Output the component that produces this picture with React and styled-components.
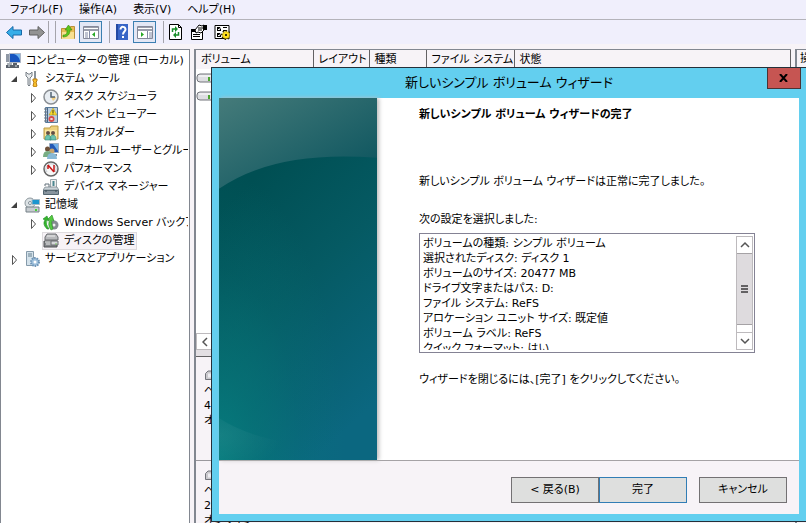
import React from 'react';
import styled, { createGlobalStyle, css } from 'styled-components';

const GlobalStyle = createGlobalStyle`
    * {
        box-sizing: border-box;
    }

    body {
        margin: 0;
        overflow: hidden;
        background: #f7f3f7;
        color: #000;
        font: 11px/18px 'DejaVu Sans', 'Noto Sans CJK JP', sans-serif;
        font-feature-settings: 'palt';
    }

    button {
        font: inherit;
        font-feature-settings: inherit;
        color: inherit;
    }
`;

const menus = ['ファイル(F)', '操作(A)', '表示(V)', 'ヘルプ(H)'];

const tree = [
    { level: 0, icon: 'computer', label: 'コンピューターの管理 (ローカル)' },
    { level: 1, icon: 'tools', label: 'システム ツール', arrow: 'open' },
    { level: 2, icon: 'clock', label: 'タスク スケジューラ', arrow: 'closed' },
    { level: 2, icon: 'event', label: 'イベント ビューアー', arrow: 'closed' },
    { level: 2, icon: 'share', label: '共有フォルダー', arrow: 'closed' },
    { level: 2, icon: 'users', label: 'ローカル ユーザーとグループ', arrow: 'closed' },
    { level: 2, icon: 'gauge', label: 'パフォーマンス', arrow: 'closed' },
    { level: 2, icon: 'device', label: 'デバイス マネージャー' },
    { level: 1, icon: 'storage', label: '記憶域', arrow: 'open' },
    { level: 2, icon: 'backup', label: 'Windows Server バックアップ', arrow: 'closed' },
    { level: 2, icon: 'disk', label: 'ディスクの管理', selected: true },
    { level: 1, icon: 'service', label: 'サービスとアプリケーション', arrow: 'closed' },
];

const settings = [
    'ボリュームの種類: シンプル ボリューム',
    '選択されたディスク: ディスク 1',
    'ボリュームのサイズ: 20477 MB',
    'ドライブ文字またはパス: D:',
    'ファイル システム: ReFS',
    'アロケーション ユニット サイズ: 既定値',
    'ボリューム ラベル: ReFS',
    'クイック フォーマット: はい',
];

const icons = {
    back: (
        <path d="M.5 8.500 7 2.500v3.500h8.500v5H7v3.500Z" fill="#36aee8" stroke="#1769a8" />
    ),
    forward: (
        <path d="M15.500 8.500 9 2.500v3.500H.5v5H9v3.500Z" fill="#939393" stroke="#606060" />
    ),
    up: (
        <>
            <path d="M1.500 4.500h8l1-2h4v12h-13Z" fill="#e9bd55" stroke="#b9913a" />
            <path d="M2 15V8h12v7Z" fill="#f8df91" />
            <path d="M3 11c4 0 4-2 4-5H5l3.500-5L12 6h-2c0 4-2 7-7 7Z" fill="#5cc51d" stroke="#39880f" strokeWidth=".6" />
        </>
    ),
    paneLeft: (
        <>
            <path d="M.5 2.500h15v12H.5Z" fill="#fff" stroke="#85899a" />
            <path d="M1 3h14v1H1ZM1 5h14v2H1Z" fill="#9a9dab" />
            <path d="M6.500 7v7M2 9h3M2 11h3M2 13h3" stroke="#8188a4" />
            <path d="m12 8-3 2.500 3 2.500Z" fill="#27a825" />
        </>
    ),
    help: (
        <>
            <path d="M2 0h12v16H2Z" fill="#3865c7" />
            <path d="M2 0h2v16H2Z" fill="#2349a3" />
            <path d="M6.500 5.500c0-4 5-3 5 0 0 2-2.500 2-2.500 5M9 12v2" fill="none" stroke="#fff" strokeWidth="2" />
        </>
    ),
    paneRight: (
        <>
            <path d="M.5 2.500h15v12H.5Z" fill="#fff" stroke="#85899a" />
            <path d="M1 3h14v1H1ZM1 5h14v2H1Z" fill="#9a9dab" />
            <path d="M10.500 7v7M12 9h3M12 11h3M12 13h3" stroke="#8188a4" />
            <path d="m4 8 3 2.500L4 13Z" fill="#27a825" />
        </>
    ),
    refresh: (
        <>
            <path d="M1.500.5h9l3 3v12h-12Z" fill="#fff" stroke="#000" />
            <path d="M10.500.5v3h3" fill="none" stroke="#000" />
            <path d="M4.500 8V5H8M10.500 8v3H7" fill="none" stroke="#168c28" strokeWidth="1.500" />
            <path d="m7 2 3 3-3 3ZM8 8l-3 3 3 3Z" fill="#168c28" />
        </>
    ),
    properties: (
        <>
            <path d="M.5 5.500h11v10H.5Z" fill="#fff" stroke="#000" />
            <path d="M0 5h11v3H0Z" />
            <path d="M2 10.500h7M2 12.500h7" stroke="#000" />
            <path d="m4 6 4-5 3 1 2-1v5l-3 3-3-1-2 1Z" fill="#fff" stroke="#000" />
            <path d="M7 4h5M7 6h4" stroke="#000" />
            <path d="M12 1h4v5h-4Z" />
        </>
    ),
    console: (
        <>
            <path d="M1 1.500h14v13H1Z" fill="#fff" stroke="#000" />
            <path d="M3 3h4v4H3ZM3 9h4v4H3ZM9 3h4v1H9ZM9 6h4v1H9Z" />
            <path d="m4 5 1 1 2-3M4 11l1 1 2-3" stroke="#fff" fill="none" />
            <circle cx="12" cy="11" r="4" fill="none" stroke="#302a00" strokeDasharray="1.500 1.500" strokeWidth="2" />
            <circle cx="12" cy="11" r="3.500" fill="#ffdf20" stroke="#b99b00" strokeWidth=".5" />
            <circle cx="12" cy="11" r="1" />
        </>
    ),
    computer: (
        <>
            <path d="M1 1h3v8H1Z" fill="#8f98a5" />
            <path d="M4.500.5h11v9h-11Z" fill="#1755bf" stroke="#adb5c3" />
            <path d="M9 1h6v7c-1-4-3-6-6-7" fill="#6eb3ee" />
            <path d="M8 10h4v2H8ZM1 12h13v3H1Z" fill="#59616b" />
            <path d="M2 10h5v2H2Z" fill="#aab1b7" />
            <path d="M3 13h2M10 13h2" stroke="#dce4e9" />
        </>
    ),
    tools: (
        <>
            <path d="M2 1v4l2 2v7q1 2 2 0V7l2-2V1L6 3H4Z" fill="#e8ebed" stroke="#777f86" />
            <path d="M11 0v8" stroke="#89929a" strokeWidth="2" />
            <path d="M9 8h4v2l-1 1 1 4q-2 2-4 0l1-4-1-1Z" fill="#f9c12d" stroke="#b87d13" />
        </>
    ),
    clock: (
        <>
            <circle cx="8" cy="8" r="7" fill="#e8edf2" stroke="#8b8f94" strokeWidth="1.500" />
            <path d="M8 8h5a5 5 0 0 1-3 4Z" fill="#f3ce7e" />
            <path d="M8 3v5h4" fill="none" stroke="#536474" strokeWidth="1.500" />
        </>
    ),
    event: (
        <>
            <path d="M2.500.5h12v15h-12Z" fill="#b9cdde" stroke="#57799a" />
            <path d="M4.500 1v14" stroke="#456589" />
            <path d="M1 2h3M1 5h3M1 8h3M1 11h3M1 14h3" stroke="#707881" />
            <path d="m10 1 4 7H6Z" fill="#f8dc2b" stroke="#af931c" strokeWidth=".5" />
            <path d="M10 3v3M10 6.500v1" stroke="#3d3b20" />
            <circle cx="8.500" cy="12" r="3" fill="#d84a49" />
            <path d="m7.500 11 2 2m0-2-2 2" stroke="#fff" />
        </>
    ),
    share: (
        <>
            <path d="M1 3h6l1-2h7v13H1Z" fill="#eed27d" stroke="#bd9b45" />
            <path d="M2 5h12v9H2Z" fill="#fae6a0" />
            <circle cx="5" cy="8" r="2" fill="#655044" />
            <circle cx="10" cy="8" r="2" fill="#655044" />
            <path d="M2 15q0-5 3-5t3 5ZM7 15q0-5 3-5t3 5Z" fill="#6cc4b0" stroke="#368878" strokeWidth=".6" />
        </>
    ),
    users: (
        <>
            <path d="M6.500.5h9v9h-9Z" fill="#2358b4" stroke="#9cadc1" />
            <path d="M10 1h5v7Z" fill="#70afe8" />
            <path d="M10 11h4v2h-4Z" fill="#7e8896" />
            <circle cx="4.500" cy="6" r="2.500" fill="#6e5139" />
            <circle cx="9" cy="8" r="2.500" fill="#c9a46c" />
            <path d="M0 14q0-6 4.500-6t5 6Z" fill="#78ad84" />
            <path d="M4 16q0-6 5-6t5 6Z" fill="#88b9d6" />
        </>
    ),
    gauge: (
        <>
            <circle cx="8" cy="8" r="7" fill="#f7f7f7" stroke="#666" strokeWidth="1.500" />
            <path d="M4 11a5 5 0 1 1 8 0" fill="none" stroke="#c5ccd2" />
            <path d="m5 4 6 7M5 4v4M11 4v7" stroke="#c61818" strokeWidth="1.500" />
        </>
    ),
    device: (
        <>
            <path d="M7.500.5h6v9h-6Z" fill="#eee" stroke="#9ca7ac" />
            <path d="M10.500 2v5" stroke="#4c8790" strokeWidth="2" />
            <path d="M2 7V5h4v3" fill="none" stroke="#63717b" />
            <path d="M2 8h12l2 3H0Z" fill="#cbd3d8" stroke="#63717b" strokeWidth=".6" />
            <path d="M.5 11.500h15v4H.5Z" fill="#87949e" stroke="#546670" />
            <path d="M3 11v2M13 11v2" stroke="#394852" />
        </>
    ),
    storage: (
        <>
            <circle cx="6" cy="6" r="5" fill="#dce2e5" stroke="#8f999f" />
            <circle cx="6" cy="6" r="1.500" fill="#fff" stroke="#839098" />
            <path d="M8 2.500h7.500v5H8Z" fill="#1c95cf" stroke="#a8bac5" />
            <path d="M2 10h13v5H2Z" fill="#c7ccd0" stroke="#758087" />
            <path d="M11 12h2v2h-2Z" fill="#45cf35" />
        </>
    ),
    backup: (
        <>
            <circle cx="11" cy="10" r="4.500" fill="#858b91" />
            <circle cx="11" cy="10" r="1.500" fill="#eee" />
            <path d="M4 14Q-1 9 2 5L0 4l4-3 2 5-2-1q-2 4 2 9Z" fill="#35b52d" stroke="#228b26" strokeWidth=".6" />
            <path d="M8 15Q4 9 7 5L5 4l4-4 2 6-2-1q-1 3 1 9Z" fill="#55ca40" stroke="#268c27" strokeWidth=".6" />
        </>
    ),
    disk: (
        <>
            <path d="M2 4 4 1h9l2 3v3H2Z" fill="#b8b9bc" stroke="#696b6e" />
            <path d="M4 3h8" stroke="#eee" />
            <path d="M1 8h13v6H1Z" fill="#85888b" stroke="#4e5153" />
            <path d="M2 9h12M3 11h6" stroke="#eee" />
            <path d="M8 8h7v4H8Z" fill="#d5d6d8" stroke="#696b6e" />
            <path d="M12 11h2" stroke="#71ba5a" />
        </>
    ),
    service: (
        <>
            <path d="M2.500.5h7v14h-7Z" fill="#d4e2eb" stroke="#859aaa" />
            <path d="M4 3h4M4 5h4" stroke="#678090" />
            <circle cx="11" cy="11" r="4" fill="#9fc0dc" stroke="#6c94b7" strokeWidth="2" strokeDasharray="1.500 1" />
            <circle cx="11" cy="11" r="1.500" fill="#fff" />
        </>
    ),
    drive: (
        <>
            <path d="M1 7q0-3 3-3h12v8H4q-3 0-3-3Z" fill="#dedee2" stroke="#73747b" />
            <path d="M3 6h12" stroke="#fff" />
            <path d="M12 7h2v4h-2Z" fill="#4da633" />
        </>
    ),
    hardDisk: (
        <>
            <path d="M1.500 6.500 4 4h12v8.500H1.500Z" fill="#c9c8cc" stroke="#73747b" />
            <path d="M4 6.500h12v4H4Z" fill="#eeedf1" />
        </>
    ),
    openArrow: <path d="M7 5v6H1Z" fill="#404040" />,
    closedArrow: <path d="m2.500 4.500 4 4.500-4 4.500Z" fill="#fff" stroke="#555" />,
};

const Icon = ({ name, width = 16 }) => (
    <svg width={width} height="16" viewBox={`0 0 ${width} 16`} aria-hidden="true">
        {icons[name]}
    </svg>
);

const Chevron = ({ d }) => (
    <svg width="10" height="8" viewBox="0 0 10 8" aria-hidden="true">
        <path d={d} fill="none" stroke="#555" strokeWidth="1.5" />
    </svg>
);

function Wizard() {
    return (
        <Dialog role="dialog" aria-labelledby="wizard-title">
            <TitleBar>
                <Title id="wizard-title">新しいシンプル ボリューム ウィザード</Title>
                <CloseButton type="button" aria-label="閉じる">
                    <svg width="10" height="8" viewBox="0 0 10 8">
                        <path d="m1 0 7 8M8 0 1 8" stroke="#000" strokeWidth="2" />
                    </svg>
                </CloseButton>
            </TitleBar>
            <DialogBody>
                <DialogContent>
                    <Banner viewBox="0 0 158 363" preserveAspectRatio="none" aria-hidden="true">
                        <defs>
                            <linearGradient id="upper" x1="0" y1="0" x2="1" y2="1">
                                <stop stopColor="#457b7a" />
                                <stop offset="1" stopColor="#07515c" />
                            </linearGradient>
                            <linearGradient id="lower" x1=".2" y1="0" x2=".6" y2="1">
                                <stop offset=".2" stopColor="#004f53" />
                                <stop offset=".55" stopColor="#055a63" />
                                <stop offset="1" stopColor="#0b6780" />
                            </linearGradient>
                            <radialGradient id="glow" cx="0" cy="1" r=".8">
                                <stop stopColor="#067f7f" stopOpacity=".9" />
                                <stop offset=".3" stopColor="#067a7a" stopOpacity=".6" />
                                <stop offset=".65" stopColor="#067a7a" stopOpacity=".2" />
                                <stop offset="1" stopColor="#067a7a" stopOpacity="0" />
                            </radialGradient>
                            <radialGradient id="sheen" cx="0" cy=".4" r=".9">
                                <stop stopColor="#fff" stopOpacity=".06" />
                                <stop offset="1" stopColor="#fff" stopOpacity="0" />
                            </radialGradient>
                        </defs>
                        <path d="M0 0h158v363H0Z" fill="url(#lower)" />
                        <path d="M0 0h158v363H0Z" fill="url(#glow)" />
                        <path d="M0 0h158v60Q56 52 0 91Z" fill="url(#upper)" />
                        <path d="M0 321q25 17 70 25v17H0Z" fill="url(#sheen)" />
                    </Banner>
                    <Copy>
                        <Heading>新しいシンプル ボリューム ウィザードの完了</Heading>
                        <Message>新しいシンプル ボリューム ウィザードは正常に完了しました。</Message>
                        <ListLabel id="settings-label">次の設定を選択しました:</ListLabel>
                        <SettingsBox role="group" aria-labelledby="settings-label">
                            <SettingsList>
                                {settings.map((line) => (
                                    <li key={line}>{line}</li>
                                ))}
                            </SettingsList>
                            <ScrollBar>
                                <ScrollButton type="button" aria-label="上へ">
                                    <Chevron d="m1 6 4-4 4 4" />
                                </ScrollButton>
                                <ScrollThumb>
                                    <i />
                                    <i />
                                    <i />
                                </ScrollThumb>
                                <ScrollTrack />
                                <ScrollButton type="button" aria-label="下へ">
                                    <Chevron d="m1 2 4 4 4-4" />
                                </ScrollButton>
                            </ScrollBar>
                        </SettingsBox>
                        <Closing>ウィザードを閉じるには、[完了] をクリックしてください。</Closing>
                    </Copy>
                </DialogContent>
                <DialogFooter>
                    <ButtonPair>
                        <WizardButton type="button">&lt; 戻る(B)</WizardButton>
                        <WizardButton type="button" $primary>
                            完了
                        </WizardButton>
                    </ButtonPair>
                    <WizardButton type="button">キャンセル</WizardButton>
                </DialogFooter>
            </DialogBody>
        </Dialog>
    );
}

export default function App() {
    return (
        <>
            <GlobalStyle />
            <Window>
                <MenuBar>
                    {menus.map((label) => (
                        <MenuItem type="button" key={label}>
                            {label}
                        </MenuItem>
                    ))}
                </MenuBar>
                <ToolBar>
                    <ToolButton type="button" aria-label="戻る"><Icon name="back" /></ToolButton>
                    <ToolButton type="button" aria-label="進む"><Icon name="forward" /></ToolButton>
                    <Divider $double />
                    <ToolButton type="button" aria-label="上へ"><Icon name="up" /></ToolButton>
                    <ToolButton type="button" aria-label="ツリーの表示" $active><Icon name="paneLeft" /></ToolButton>
                    <Divider />
                    <ToolButton type="button" aria-label="ヘルプ"><Icon name="help" /></ToolButton>
                    <ToolButton type="button" aria-label="操作の表示" $active><Icon name="paneRight" /></ToolButton>
                    <Divider />
                    <ToolButton type="button" aria-label="更新"><Icon name="refresh" /></ToolButton>
                    <ToolButton type="button" aria-label="プロパティ"><Icon name="properties" /></ToolButton>
                    <ToolButton type="button" aria-label="設定"><Icon name="console" /></ToolButton>
                </ToolBar>
                <Panes>
                    <Tree>
                        {tree.map((item) => (
                            <TreeRow key={item.label} $level={item.level}>
                                {item.level > 0 && (
                                    <Arrow>
                                        {item.arrow && <Icon name={`${item.arrow}Arrow`} width={8} />}
                                    </Arrow>
                                )}
                                <TreeItem $selected={item.selected}>
                                    <Icon name={item.icon} />
                                    <span>{item.label}</span>
                                </TreeItem>
                            </TreeRow>
                        ))}
                    </Tree>
                    <Results>
                        <VolumeArea>
                            <VolumeTable>
                                <thead>
                                    <tr>
                                        <Column $width="117px">ボリューム</Column>
                                        <Column $width="56px">レイアウト</Column>
                                        <Column $width="57px">種類</Column>
                                        <Column $width="88px">ファイル システム</Column>
                                        <Column>状態</Column>
                                    </tr>
                                </thead>
                                <tbody>
                                    <tr><td colSpan="5"><Icon name="drive" /></td></tr>
                                    <tr><td colSpan="5"><Icon name="drive" /></td></tr>
                                </tbody>
                            </VolumeTable>
                            <SideScroll type="button" aria-label="左へ">
                                <svg width="6" height="10" viewBox="0 0 6 10">
                                    <path d="M5 1 1 5l4 4" fill="none" stroke="#555" strokeWidth="1.500" />
                                </svg>
                            </SideScroll>
                        </VolumeArea>
                        <DiskArea>
                            <DiskRow>
                                <Icon name="hardDisk" />
                                <p>ベーシック</p>
                                <p>40.00 GB</p>
                                <p>オンライン</p>
                            </DiskRow>
                            <DiskRow>
                                <Icon name="hardDisk" />
                                <p>ベーシック</p>
                                <p>20.00 GB</p>
                                <p>オンライン</p>
                            </DiskRow>
                        </DiskArea>
                    </Results>
                    <Actions>操作</Actions>
                </Panes>
                <Wizard />
            </Window>
        </>
    );
}

const Window = styled.main`
    position: relative;
    display: flex;
    flex-direction: column;
    height: 100vh;
    overflow: hidden;
`;

const MenuBar = styled.nav`
    display: flex;
    flex: none;
    gap: 16px;
    height: 19px;
    padding: 0 10px;
    background: #f0effc;
`;

const MenuItem = styled.button`
    padding: 0;
    border: 0;
    background: none;
    line-height: 16px;
`;

const ToolBar = styled.div`
    display: flex;
    flex: none;
    align-items: center;
    height: 25px;
    padding: 0 2px;
    border-top: 1px solid #b4b3ba;
    background: #f0effc;
`;

const ToolButton = styled.button`
    display: grid;
    place-items: center;
    width: 23px;
    height: 22px;
    padding: 0;
    border: 1px solid ${({ $active }) => ($active ? '#3c7fb1' : 'transparent')};
    background: ${({ $active }) => ($active ? '#e3e7f5' : 'none')};
`;

const Divider = styled.span`
    width: 8px;
    height: 22px;
    border: 0 solid #a5a4ac;
    border-width: ${({ $double }) => ($double ? '0 1px' : '0 1px 0 0')};
`;

const Panes = styled.div`
    display: flex;
    flex: 1;
    gap: 4px;
    min-height: 0;
    padding-top: 5px;
`;

const Tree = styled.ul`
    flex: 0 0 190px;
    margin: 0;
    padding: 2px 1px 0 0;
    overflow: hidden;
    list-style: none;
    border: 1px solid #828790;
    border-bottom: 0;
    background: #fff;
`;

const TreeRow = styled.li`
    display: flex;
    height: 18px;
    padding-left: ${({ $level }) => ($level ? $level * 19 - 10 : 3)}px;
    overflow: hidden;
    white-space: nowrap;
`;

const Arrow = styled.span`
    display: flex;
    flex: 0 0 13px;
    align-items: center;
`;

const TreeItem = styled.span`
    display: flex;
    align-items: center;
    gap: 5px;
    padding-right: 2px;
    border: 1px solid ${({ $selected }) => ($selected ? '#dedbde' : 'transparent')};
    background: ${({ $selected }) => ($selected ? '#f7f3f7' : 'none')};

    svg {
        flex: none;
    }
`;

const Results = styled.section`
    display: flex;
    flex: 1;
    flex-direction: column;
    min-width: 0;
    border: 1px solid #828790;
    border-width: 1px 0 0 2px;
`;

const VolumeArea = styled.div`
    display: flex;
    flex: none;
    flex-direction: column;
    justify-content: space-between;
    height: 306px;
    background: #fff;
    border-bottom: 6px solid #e3dfe3;
`;

const VolumeTable = styled.table`
    width: 100%;
    table-layout: fixed;
    border-collapse: collapse;

    td {
        height: 18px;
        padding: 0;
    }

    svg {
        display: block;
    }
`;

const Column = styled.th`
    width: ${({ $width }) => $width || 'auto'};
    height: 18px;
    padding: 1px 0 0 5px;
    overflow: hidden;
    font-weight: 400;
    text-align: left;
    white-space: nowrap;
    background: #f7f3f7;
    border-right: 1px solid #636163;
`;

const SideScroll = styled.button`
    display: grid;
    place-items: center;
    width: 17px;
    height: 17px;
    padding: 0;
    border: 1px solid #bdbabd;
    background: #fff;
`;

const DiskArea = styled.div`
    flex: 1;
    min-height: 0;
    padding-top: 4px;
    overflow: hidden;
    border-top: 1px solid #636163;
`;

const DiskRow = styled.div`
    height: 100px;
    padding: 6px 8px;
    border-bottom: 1px solid #9a989d;
    line-height: 15px;

    p {
        margin: 0;
    }

    svg {
        display: block;
    }
`;

const Actions = styled.aside`
    flex: 0 0 11px;
    padding-left: 3px;
    overflow: hidden;
    border: 1px solid #828790;
    border-width: 1px 0 0 2px;
    white-space: nowrap;
`;

const Dialog = styled.section`
    position: absolute;
    top: 67px;
    right: 0;
    bottom: 1px;
    left: 211px;
    display: flex;
    flex-direction: column;
    padding: 0 7px;
    border: 1px solid #24303a;
    border-right: 0;
    background: #63cfef;
`;

const TitleBar = styled.header`
    display: flex;
    flex: 0 0 30px;
    align-items: flex-start;
    margin-right: -2px;
`;

const Title = styled.h1`
    flex: 1;
    margin: 0;
    padding-left: 32px;
    font-size: 13px;
    font-weight: 400;
    line-height: 30px;
    text-align: center;
`;

const CloseButton = styled.button`
    display: grid;
    place-items: center;
    width: 34px;
    height: 21px;
    padding: 0;
    border: 1px solid #4b3334;
    border-top: 0;
    background: #c65552;
`;

const DialogBody = styled.div`
    display: flex;
    flex: 1;
    flex-direction: column;
    min-height: 0;
    margin-bottom: 7px;
    background: #f7f3f7;
`;

const DialogContent = styled.div`
    display: flex;
    flex: 1;
    min-height: 0;
    background: #fff;
    border-bottom: 1px solid #a5a2a5;
`;

const Banner = styled.svg`
    flex: 0 0 158px;
    width: 158px;
    height: 100%;
    box-shadow: 2px 0 4px #bbb;
`;

const Copy = styled.div`
    flex: 1;
    min-width: 0;
    padding: 8px 44px 0 42px;
`;

const Heading = styled.h2`
    margin: 0 0 49px;
    font-size: 11px;
    line-height: 18px;
`;

const Message = styled.p`
    margin: 0 0 20px;
`;

const ListLabel = styled.p`
    margin: 0 0 4px;
`;

const SettingsBox = styled.div`
    display: flex;
    height: 120px;
    padding: 2px 1px 2px 3px;
    border: 1px solid #848294;
`;

const SettingsList = styled.ul`
    flex: 1;
    margin: 0;
    padding: 0;
    overflow: hidden;
    list-style: none;
    line-height: 15px;
`;

const ScrollBar = styled.div`
    display: flex;
    flex: 0 0 17px;
    flex-direction: column;
    border: 1px solid #bdbabd;
`;

const ScrollButton = styled.button`
    display: grid;
    flex: 0 0 16px;
    place-items: center;
    padding: 0;
    border: 0;
    background: #fff;
`;

const ScrollThumb = styled.div`
    display: flex;
    flex: 0 0 72px;
    flex-direction: column;
    align-items: center;
    justify-content: center;
    gap: 1px;
    border: 1px solid #a5a2a5;
    border-width: 1px 0;
    background: #dedbde;

    i {
        width: 7px;
        height: 2px;
        background: #636163;
    }
`;

const ScrollTrack = styled.div`
    flex: 1;
    border-bottom: 1px solid #bdbabd;
`;

const Closing = styled.p`
    margin: 18px 0 0;
`;

const DialogFooter = styled.footer`
    display: flex;
    flex: 0 0 53px;
    gap: 12px;
    align-items: center;
    justify-content: flex-end;
    padding: 5px 12px 0 0;
`;

const ButtonPair = styled.div`
    display: flex;
`;

const WizardButton = styled.button`
    width: 88px;
    height: 26px;
    padding: 0;
    background: #dedfde;
    border: 1px solid #737173;
    ${({ $primary }) =>
        $primary &&
        css`
            border-color: #317db5;
        `}
`;
